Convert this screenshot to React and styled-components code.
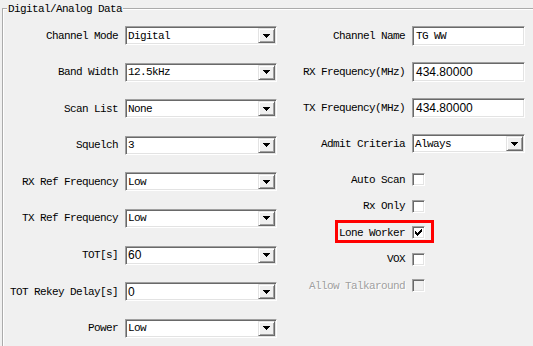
import styled, { createGlobalStyle, css } from 'styled-components'

const GlobalStyle = createGlobalStyle`
  body {
    margin: 0;
    background: #f0f0f0;
    overflow: hidden;
  }
`

const Page = styled.div`
  width: 533px;
  height: 346px;
  overflow: hidden;
  background: #f0f0f0;
  font-family: "Liberation Mono", "DejaVu Sans Mono", monospace;
  font-size: 11px;
  letter-spacing: -0.6px;
  color: #000;
`

const Group = styled.fieldset`
  margin: 2px 0 0 2px;
  padding: 10px 0 0 0;
  width: 620px;
  height: 420px;
  box-sizing: border-box;
  border: 2px groove #fff;
`

const Legend = styled.legend`
  margin-left: 3px;
  padding: 0 1px;
  line-height: 14px;
`

const Columns = styled.div`
  display: flex;
  align-items: flex-start;
  gap: 5px;
`

const LeftCol = styled.div`
  display: flex;
  flex-direction: column;
  gap: 17.6px;
`

const RightCol = styled.div`
  display: flex;
  flex-direction: column;
  gap: 16px;
`

const Checks = styled.div`
  display: flex;
  flex-direction: column;
  gap: 13.5px;
  margin-top: 4px;
`

const Row = styled.div`
  display: grid;
  grid-template-columns: ${p => p.$label}px ${p => p.$field}px;
  column-gap: 5px;
  align-items: center;
  height: ${p => p.$h || 19}px;
  position: relative;

  ${p => p.$highlight && css`
    &::after {
      content: '';
      position: absolute;
      left: 53px;
      top: -6px;
      width: 99px;
      height: 23px;
      box-sizing: border-box;
      border: 3px solid #ff0000;
    }
  `}
`

const Label = styled.span`
  text-align: right;
  padding-right: 2px;
  white-space: nowrap;
  color: ${p => (p.$disabled ? '#a0a0a0' : '#000')};
  text-shadow: ${p => (p.$disabled ? '1px 1px #fff' : 'none')};
`

const sunken = css`
  box-sizing: border-box;
  border: 1px solid;
  border-color: #a0a0a0 #fff #fff #a0a0a0;
  box-shadow: inset 1px 1px #696969, inset -1px -1px #e3e3e3;
`

const Combo = styled.div`
  ${sunken}
  height: 19px;
  display: flex;
  align-items: center;
  background: #fff;
  padding: 1px;
`

const TextBox = styled.div`
  ${sunken}
  height: 20px;
  display: flex;
  align-items: center;
  background: #fff;
  padding: 1px 2px;
`

const Value = styled.span`
  flex: 1;
  padding-left: 1px;
  white-space: nowrap;
  ${p => p.$sans && css`
    font-family: "Liberation Sans", Arial, sans-serif;
    font-size: 12px;
    letter-spacing: 0;
  `}
`

const DropButton = styled.span`
  width: 17px;
  height: 15px;
  box-sizing: border-box;
  display: grid;
  place-items: center;
  background: #f0f0f0;
  border: 1px solid;
  border-color: #e3e3e3 #696969 #696969 #e3e3e3;
  box-shadow: inset 1px 1px #fff, inset -1px -1px #a0a0a0;
`

const Box = styled.span`
  ${sunken}
  width: 13px;
  height: 13px;
  display: grid;
  place-items: center;
  background: ${p => (p.$disabled ? '#f0f0f0' : '#fff')};
`

const Arrow = () => (
  <svg width="7" height="4" viewBox="0 0 7 4" shapeRendering="crispEdges">
    <path d="M0 0h7v1H0z M1 1h5v1H1z M2 2h3v1H2z M3 3h1v1H3z" fill="#000" />
  </svg>
)

const Check = () => (
  <svg width="7" height="7" viewBox="0 0 7 7" shapeRendering="crispEdges">
    <path
      d="M6 0h1v3H6z M5 1h1v3H5z M4 2h1v3H4z M3 3h1v3H3z M2 4h1v3H2z M1 3h1v3H1z M0 2h1v3H0z"
      fill="#000"
    />
  </svg>
)

const Select = ({ value, sans }) => (
  <Combo>
    <Value $sans={sans}>{value}</Value>
    <DropButton><Arrow /></DropButton>
  </Combo>
)

const left = [
  { label: 'Channel Mode', value: 'Digital' },
  { label: 'Band Width', value: '12.5kHz' },
  { label: 'Scan List', value: 'None' },
  { label: 'Squelch', value: '3' },
  { label: 'RX Ref Frequency', value: 'Low' },
  { label: 'TX Ref Frequency', value: 'Low' },
  { label: 'TOT[s]', value: '60', sans: true },
  { label: 'TOT Rekey Delay[s]', value: '0', sans: true },
  { label: 'Power', value: 'Low' },
]

const checks = [
  { label: 'Auto Scan' },
  { label: 'Rx Only' },
  { label: 'Lone Worker', checked: true, highlight: true },
  { label: 'VOX' },
  { label: 'Allow Talkaround', disabled: true },
]

export default function App() {
  return (
    <Page>
      <GlobalStyle />
      <Group>
        <Legend>Digital/Analog Data</Legend>
        <Columns>
          <LeftCol>
            {left.map(r => (
              <Row key={r.label} $label={116} $field={152}>
                <Label>{r.label}</Label>
                <Select value={r.value} sans={r.sans} />
              </Row>
            ))}
          </LeftCol>

          <RightCol>
            <Row $label={125} $field={113} $h={20}>
              <Label>Channel Name</Label>
              <TextBox><Value>TG WW</Value></TextBox>
            </Row>
            <Row $label={125} $field={113} $h={20}>
              <Label>RX Frequency(MHz)</Label>
              <TextBox><Value $sans>434.80000</Value></TextBox>
            </Row>
            <Row $label={125} $field={113} $h={20}>
              <Label>TX Frequency(MHz)</Label>
              <TextBox><Value $sans>434.80000</Value></TextBox>
            </Row>
            <Row $label={125} $field={113}>
              <Label>Admit Criteria</Label>
              <Select value="Always" />
            </Row>
            <Checks>
              {checks.map(c => (
                <Row key={c.label} $label={125} $field={13} $h={13} $highlight={c.highlight}>
                  <Label $disabled={c.disabled}>{c.label}</Label>
                  <Box $disabled={c.disabled}>{c.checked && <Check />}</Box>
                </Row>
              ))}
            </Checks>
          </RightCol>
        </Columns>
      </Group>
    </Page>
  )
}
